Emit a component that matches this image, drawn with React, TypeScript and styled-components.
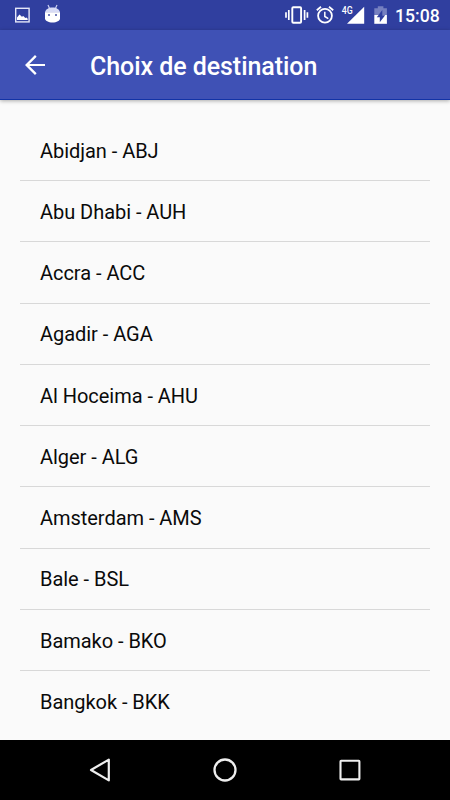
import React from "react";
import styled, { createGlobalStyle } from "styled-components";

const GlobalStyle = createGlobalStyle`
  * { box-sizing: border-box; }
  body { margin: 0; background: #fafafa; font-family: Roboto, sans-serif; }
`;

const Screen = styled.div`
  display: flex;
  flex-direction: column;
  width: 450px;
  height: 800px;
  overflow: hidden;
  background: #fafafa;
`;

const StatusBar = styled.div`
  display: flex;
  justify-content: space-between;
  flex: none;
  height: 30px;
  background: #303f9f;
  color: #fff;
`;

const StatusGroup = styled.div`
  display: flex;
  align-items: center;
`;

const Clock = styled.span`
  width: 55px;
  font-size: 17.6px;
  font-weight: 500;
  line-height: 30px;
  padding-top: 1px;
`;

const AppBar = styled.header`
  display: flex;
  align-items: center;
  flex: none;
  height: 70px;
  padding-left: 20px;
  background: #3f51b5;
  border-bottom: 1px solid #1233a6;
  box-shadow: 0 1px 4px rgba(0, 0, 0, 0.32);
  z-index: 1;
`;

const BackButton = styled.button`
  display: flex;
  width: 70px;
  padding: 0;
  border: 0;
  background: none;
`;

const Title = styled.h1`
  margin: 4px 0 0;
  color: #fff;
  font-size: 25px;
  font-weight: 500;
  letter-spacing: -0.06px;
  line-height: 30px;
  white-space: nowrap;
`;

const List = styled.ul`
  flex: 1;
  min-height: 0;
  margin: 0;
  padding: 19.75px 20px 0;
  list-style: none;
  overflow: hidden;
`;

const Row = styled.li`
  height: 61.25px;
  padding: 0.75px 20px 0;
  border-bottom: 1px solid #d8d8d8;
  color: #0a0a0a;
  font-size: 20px;
  letter-spacing: -0.04px;
  line-height: 60px;

  &:last-child { border-bottom: 0; }
`;

const NavBar = styled.nav`
  display: flex;
  justify-content: center;
  gap: 95px;
  align-items: center;
  flex: none;
  height: 60px;
  background: #000;
`;

const destinations = [
  "Abidjan - ABJ",
  "Abu Dhabi - AUH",
  "Accra - ACC",
  "Agadir - AGA",
  "Al Hoceima - AHU",
  "Alger - ALG",
  "Amsterdam - AMS",
  "Bale - BSL",
  "Bamako - BKO",
  "Bangkok - BKK",
];

const NotificationIcons = () => (
  <svg width="75" height="30" viewBox="0 0 75 30">
    <rect x="15.7" y="8.3" width="13.4" height="13.6" fill="none" stroke="#e4e7f8" strokeWidth="1.4" />
    <path d="M17 20v-2.5l2.5-3 2.4 2.3 1.4-.8 2 2.1 1.2-.6 1.2 1.2V20z" fill="#fff" />
    <path d="M48 5l1.8 4M57 5l-1.8 4" stroke="#c9cff0" strokeWidth="1.2" />
    <path d="M45 12.5C45.4 9.5 48.4 7.5 52.5 7.5s7.1 2 7.5 5z" fill="#d7dbf5" />
    <path d="M45 12.3h15v6c0 2.6-3.3 4.2-7.5 4.2S45 20.9 45 18.3z" fill="#fff" />
    <circle cx="49" cy="15" r="1" fill="#4452a6" />
    <circle cx="56" cy="15" r="1" fill="#4452a6" />
  </svg>
);

const SystemIcons = () => (
  <svg width="115" height="30" viewBox="280 0 115 30">
    <rect x="292.3" y="7.3" width="8.8" height="15.4" rx="1" fill="none" stroke="#fff" strokeWidth="1.9" />
    <path d="M288.8 10v10M304.6 10v10M286 12.3v5.5M307.4 12.3v5.5" stroke="#fff" strokeWidth="1.7" />
    <circle cx="325" cy="15.8" r="6.9" fill="none" stroke="#fff" strokeWidth="1.8" />
    <path d="M316.8 10.3l4.2-3.5M333.2 10.3L329 6.8" stroke="#fff" strokeWidth="1.8" />
    <path d="M324.8 11.8v4.7l3.5 2.1" fill="none" stroke="#fff" strokeWidth="1.5" />
    <text x="341.8" y="14.3" fill="#fff" fontFamily="Roboto" fontSize="10.5" fontWeight="500" textLength="11" lengthAdjust="spacingAndGlyphs">4G</text>
    <path d="M364.2 6.8v17H347z" fill="#fff" />
    <path d="M374.3 8.2h3.5V6.3h5.6v1.9h3.5v6.8h-12.6z" fill="#7680c0" />
    <path d="M374.3 15h12.600v8.8h-12.6z" fill="#fff" />
    <path d="M382.300 10v5.200h2.900l-5.400 7v-5h-3z" fill="#303f9f" />
  </svg>
);

export default function App() {
  return (
    <>
      <GlobalStyle />
      <Screen>
        <StatusBar>
          <NotificationIcons />
          <StatusGroup>
            <SystemIcons />
            <Clock>15:08</Clock>
          </StatusGroup>
        </StatusBar>
        <AppBar>
          <BackButton aria-label="Retour">
            <svg width="30" height="30" viewBox="0 0 24 24" fill="#fff">
              <path d="M20 11.2H7.5l5.8-5.8L12 4l-8 8 8 8 1.3-1.4L7.5 12.8H20z" />
            </svg>
          </BackButton>
          <Title>Choix de destination</Title>
        </AppBar>
        <List>
          {destinations.map((name) => (
            <Row key={name}>{name}</Row>
          ))}
        </List>
        <NavBar>
          <svg width="30" height="30" viewBox="0 0 30 30" fill="none" stroke="#eee" strokeWidth="2.2" strokeLinejoin="round">
            <path d="M23.8 4.6v20.8L6 15z" />
          </svg>
          <svg width="30" height="30" viewBox="0 0 30 30" fill="none" stroke="#eee" strokeWidth="2.3">
            <circle cx="15" cy="15" r="10.5" />
          </svg>
          <svg width="30" height="30" viewBox="0 0 30 30" fill="none" stroke="#eee" strokeWidth="2.1">
            <rect x="5.5" y="5.8" width="18.9" height="18.6" rx=".6" />
          </svg>
        </NavBar>
      </Screen>
    </>
  );
}
